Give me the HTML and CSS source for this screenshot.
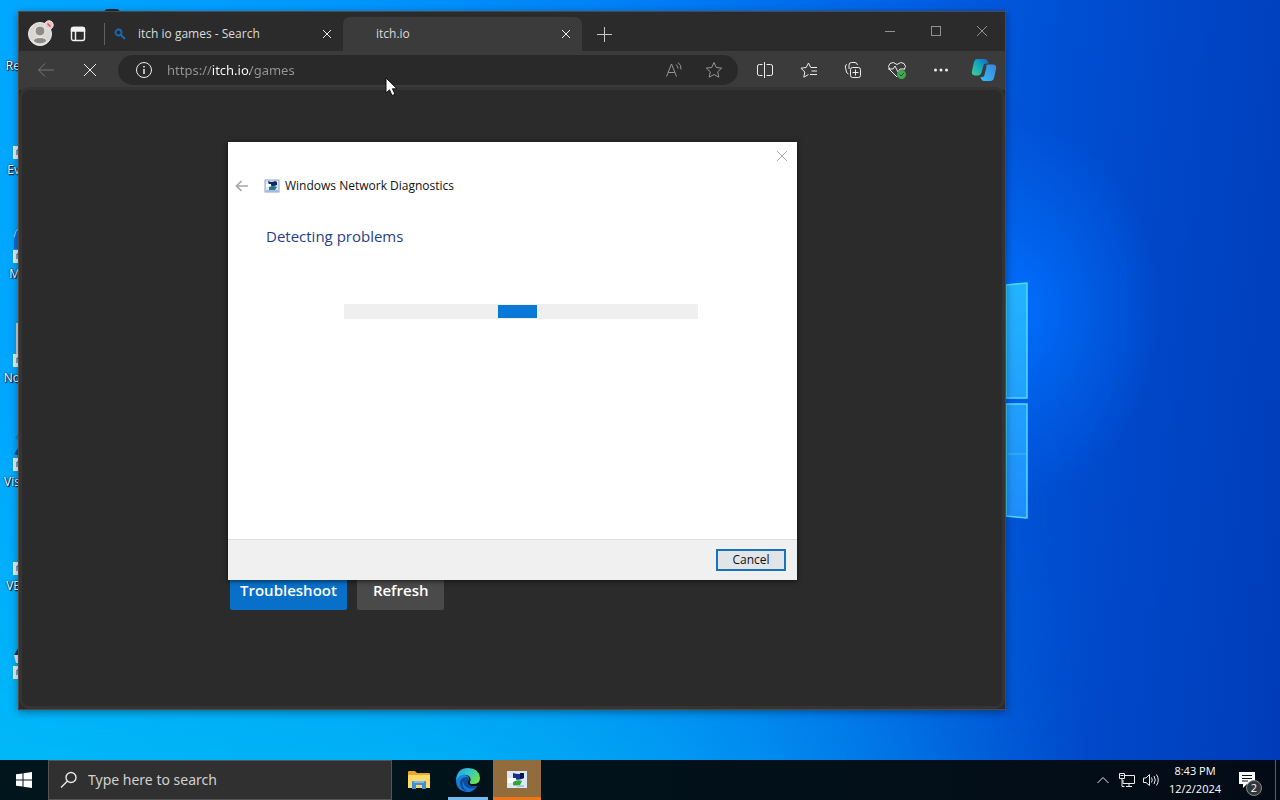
FILE: index.html
```html
<!DOCTYPE html>
<html lang="en">
<head>
<meta charset="utf-8">
<title>Desktop</title>
<link rel="stylesheet" href="styles.css">
</head>
<body>
<main class="desktop">
  <svg class="wall-logo" viewBox="0 0 22 240" aria-hidden="true">
    <defs>
      <linearGradient id="pane" x1="0" y1="0" x2="0" y2="1"><stop offset="0" stop-color="#22b4ff"/><stop offset="1" stop-color="#1f8dfa"/></linearGradient>
    </defs>
    <path d="M0 5 21 3V118H0zM0 124H21V238L0 236z" fill="url(#pane)" stroke="#4cdcff" stroke-width="1.5"/>
    <path d="M0 174h20" stroke="#38b9ff"/>
  </svg>
  <ul class="shortcuts">
    <li><span>Re</span></li>
    <li><svg viewBox="0 0 8 44"><path class="badge" d="M1 31h7v13H1z"/><path class="arrow" d="M7 35H5v5"/></svg><span>Ev</span></li>
    <li><svg viewBox="0 0 8 44"><path d="M8 8Q1 14 2 30H8z" fill="#0a6fd6"/><path d="M8 8Q3 12 2 18" stroke="#9bd4ff" fill="none"/><path class="badge" d="M1 31h7v13H1z"/><path class="arrow" d="M7 35H5v5"/></svg><span>M</span></li>
    <li><svg viewBox="0 0 8 44"><path d="M4 0h4v31H4z" fill="#cfd6da"/><path class="badge" d="M1 31h7v13H1z"/><path class="arrow" d="M7 35H5v5"/></svg><span>No</span></li>
    <li><svg viewBox="0 0 8 44"><path d="M8 4 3 11l5 3z" fill="#0b83cc"/><path d="M8 18 2 27l6 2z" fill="#0c4f86"/><path class="badge" d="M1 31h7v13H1z"/><path class="arrow" d="M7 35H5v5"/></svg><span>Vis</span></li>
    <li><svg viewBox="0 0 8 44"><path class="badge" d="M1 31h7v13H1z"/><path class="arrow" d="M7 35H5v5"/></svg><span>VE</span></li>
    <li><svg viewBox="0 0 8 44"><path d="M8 10 2 20l6 2z" fill="#123b63"/><path d="M2 20h6v8H4z" fill="#e9eef2"/><path class="badge" d="M1 31h7v13H1z"/><path class="arrow" d="M7 35H5v5"/></svg><span></span></li>
  </ul>
  <svg class="hidden-icon" viewBox="0 0 16 8" aria-hidden="true"><path d="M0 4Q1 1 4 1H12Q15 1 16 4V8H0z" fill="#12283c"/></svg>

  <section class="browser" aria-label="Browser">
    <div class="tabstrip">
      <button class="profile" aria-label="Profile">
        <svg width="26" height="26" viewBox="0 0 26 26" stroke="none"><circle cx="12" cy="14" r="11.5" fill="#d8d7d3"/><circle cx="12" cy="11" r="5" fill="#8d8c88"/><path d="M5 21Q6 17.500 12 17.500T19 21Q16 24 12 24T5 21z" fill="#8d8c88"/><circle cx="21" cy="5" r="4.200" fill="#eac6c4"/><path d="M19.500 3.500l3 3" stroke="#d2564f" stroke-width="1.500"/></svg>
      </button>
      <button class="workspaces" aria-label="Tab actions">
        <svg width="16" height="16" viewBox="0 0 16 16"><g stroke="#f2f2f2" stroke-width="1.400"><rect x="1.500" y="1.500" width="13" height="13" rx="2"/><path d="M1.500 5V3q0-1.500 1.500-1.500H13q1.500 0 1.500 1.500V5z" fill="#f2f2f2"/><path d="M5.500 5v9.500"/></g></svg>
      </button>
      <div class="tab">
        <svg class="favicon" width="12" height="12" viewBox="0 0 12 12" fill="none" stroke="#1769b5"><circle cx="4.500" cy="4.500" r="3" stroke-width="1.800"/><path d="M7 7l4 4" stroke-width="2"/></svg>
        <span>itch io games - Search</span>
        <button aria-label="Close tab"><svg width="10" height="10" viewBox="0 0 10 10"><path d="M1 1l8 8M9 1 1 9"/></svg></button>
      </div>
      <div class="tab active">
        <span>itch.io</span>
        <button aria-label="Close tab"><svg width="10" height="10" viewBox="0 0 10 10"><path d="M1 1l8 8M9 1 1 9"/></svg></button>
      </div>
      <button class="newtab" aria-label="New tab"><svg width="15" height="15" viewBox="0 0 15 15"><path d="M7.500 0v15M0 7.500h15" stroke="#c8c8c8"/></svg></button>
      <div class="caption">
        <button aria-label="Minimize"><svg width="12" height="12" viewBox="0 0 12 12"><path d="M1 6.500h10"/></svg></button>
        <button aria-label="Maximize"><svg width="12" height="12" viewBox="0 0 12 12"><rect x="1.500" y="1.500" width="9" height="9"/></svg></button>
        <button aria-label="Close"><svg width="12" height="12" viewBox="0 0 12 12"><path d="M1 1l10 10M11 1 1 11"/></svg></button>
      </div>
    </div>
    <div class="toolbar">
      <button class="back" aria-label="Back"><svg width="18" height="16" viewBox="0 0 18 16"><path d="M17 8H1.500M8 1.500 1.500 8 8 14.500"/></svg></button>
      <button aria-label="Stop"><svg width="16" height="16" viewBox="0 0 16 16"><path d="M2 2l12 12M14 2 2 14"/></svg></button>
      <div class="address">
        <button aria-label="Site information"><svg width="18" height="18" viewBox="0 0 18 18"><circle cx="9" cy="9" r="7.500"/><path d="M9 8v5M9 5v1.500" stroke-width="1.500"/></svg></button>
        <input type="text" aria-label="Address" value="https://itch.io/games">
        <button class="dim" aria-label="Read aloud"><svg width="18" height="18" viewBox="0 0 18 18"><path d="M1.500 15.500 6.500 3l5 12.500M3.200 11.500h6.600M11 3.500q2 1.500 2 4M13 1.500q3.500 2.500 3 7"/></svg></button>
        <button class="dim" aria-label="Add to favorites"><svg width="18" height="18" viewBox="0 0 18 18"><path d="M9 1.500l2.300 5 5.400.6-4 3.700 1.100 5.400L9 13.500l-4.800 2.700 1.100-5.400-4-3.700 5.400-.6z"/></svg></button>
      </div>
      <button aria-label="Split screen"><svg width="18" height="18" viewBox="0 0 18 18"><path d="M6.500 3.500H3.500Q1.500 3.500 1.500 5v8q0 1.500 2 1.500h3M10.500 3.500h4q2 0 2 1.500v8q0 1.500-2 1.500h-4M8.500 1v16"/></svg></button>
      <button aria-label="Favorites"><svg width="18" height="18" viewBox="0 0 18 18"><path d="M8.500 13.500 3.800 16.200 4.800 11 1 7.200l5.200-.7L8.500 2l2.300 4.500H17M11.500 10H17M10 13.500h7"/></svg></button>
      <button aria-label="Collections"><svg width="18" height="18" viewBox="0 0 18 18"><rect x="6.500" y="6.500" width="10" height="10" rx="2"/><path d="M11.500 8.500v6M8.500 11.500h6M4.500 13Q3 12.500 2.500 11L1.300 6Q1 4 3 3.500M5 8V4Q5 1.500 7.500 1.500H11Q13 1.500 13.500 4"/></svg></button>
      <button aria-label="Browser essentials"><svg width="20" height="20" viewBox="0 0 20 20"><path d="M10 17 3 10Q0 6 3 3.500T10 4.500Q14 1 17 3.500T17 10M1 9h5l2-3 3 6 2-3h4"/><circle cx="14.500" cy="14.500" r="4.500" fill="#3fa94d" stroke="none"/><path d="M12.500 14.500l1.500 1.500 3-3" stroke="#1e5227"/></svg></button>
      <button aria-label="Settings and more"><svg width="18" height="18" viewBox="0 0 18 18"><g fill="#eee" stroke="none"><circle cx="3.500" cy="9" r="1.500"/><circle cx="9" cy="9" r="1.500"/><circle cx="14.500" cy="9" r="1.500"/></g></svg></button>
      <button class="copilot" aria-label="Copilot">
        <svg width="26" height="24" viewBox="0 0 26 24"><defs><linearGradient id="ca" x1="0" y1="1" x2="1" y2="0"><stop offset="0" stop-color="#45cf93"/><stop offset=".5" stop-color="#15a9ba"/><stop offset="1" stop-color="#1367c5"/></linearGradient><linearGradient id="cb" x1="0" y1="1" x2="1" y2="0"><stop offset="0" stop-color="#32bdf5"/><stop offset="1" stop-color="#3a83de"/></linearGradient></defs><g stroke="none"><path d="M6 1h8q2.500 0 3.500 4.500H14.500q-1.500 0-2 2l-2 7Q9.500 17.500 7 17.500H4Q0 17 1 13L3 4Q3.800 1 6 1z" fill="url(#ca)"/><path d="M17 6.500h5q4 0 3 4.500l-2 9q-.8 3-3 3h-7q-2.500 0-3.500-4h2q1.500 0 2-2l2-8Q14.500 6.500 17 6.500z" fill="url(#cb)"/></g></svg>
      </button>
    </div>
    <div class="page">
      <button class="primary">Troubleshoot</button>
      <button>Refresh</button>
    </div>
  </section>

  <section class="dialog" role="dialog" aria-labelledby="dlg-name">
    <div class="dialog-bar">
      <button aria-label="Close"><svg width="12" height="12" viewBox="0 0 12 12"><path d="M1 1l10 10M11 1 1 11"/></svg></button>
    </div>
    <header>
      <button aria-label="Back"><svg width="14" height="12" viewBox="0 0 14 12"><path d="M13 6H2M6.500 1 1.500 6l5 5" stroke-width="1.700"/></svg></button>
      <svg width="16" height="16" viewBox="0 0 16 16"><rect x="1" y="2" width="14" height="12" fill="#dbe9fa" stroke="#95a3bd"/><path d="M4 3q4 2 7 0l2 1v3q-4 2-8 0z" fill="#142466"/><path d="M2 6h5v3H2z" fill="#fff"/><path d="M5 9q4-2 8 0l-2 3q-3 1-6 0z" fill="#237c82"/><path d="M2 12h12v2H2z" fill="#a9b9e0"/></svg>
      <span id="dlg-name">Windows Network Diagnostics</span>
    </header>
    <h1>Detecting problems</h1>
    <div class="progress" role="progressbar" aria-label="Detecting problems"><i></i></div>
    <footer><button>Cancel</button></footer>
  </section>

  <svg class="pointer" width="14" height="20" viewBox="0 0 14 20" aria-hidden="true"><path d="M1 1v15l3.500-3.200L7 18.500l3-1.300-2.600-5.400H12z" fill="#fff" stroke="#111"/></svg>
</main>

<footer class="taskbar">
  <button class="start" aria-label="Start"><svg width="16" height="16" viewBox="0 0 16 16"><path d="M0 2.300 6.500 1.400V7.500H0zM7.500 1.200 16 0V7.500H7.500zM0 8.500H6.500v6.100L0 13.700zM7.500 8.500H16V16L7.500 14.800z" fill="#fff" stroke="none"/></svg></button>
  <label class="search">
    <svg width="18" height="18" viewBox="0 0 18 18" fill="none" stroke="#e6e6e6" stroke-width="1.400"><circle cx="11" cy="6.500" r="5"/><path d="M7.500 10 1 16.500"/></svg>
    <input type="text" placeholder="Type here to search" aria-label="Type here to search">
  </label>
  <div class="apps">
    <button aria-label="File Explorer"><svg width="24" height="22" viewBox="0 0 24 22"><path d="M1 3Q1 2 2 2h6l2 2h12q1 0 1 1v14H1z" fill="#e9a92d"/><path d="M1 6h22v13H1z" fill="#ffda6b"/><path d="M5 20v-7q0-1 1-1h12q1 0 1 1v7h-4v-4H9v4z" fill="#3f8fd6"/><path d="M7 12h10v2H7z" fill="#7db9ec"/></svg></button>
    <button class="running" aria-label="Microsoft Edge"><svg width="24" height="24" viewBox="0 0 24 24"><defs><linearGradient id="ea" x1="0" y1="0" x2="1" y2=".5"><stop offset="0" stop-color="#249ce5"/><stop offset=".5" stop-color="#30c5cf"/><stop offset="1" stop-color="#69df54"/></linearGradient><linearGradient id="eb" x1="0" y1="0" x2="0" y2="1"><stop offset="0" stop-color="#1787d8"/><stop offset="1" stop-color="#1772d2"/></linearGradient></defs><path d="M0 12Q1 5 8 6.500 14 8 13 12q-2 1-1.500 3 1.500 4 10 3Q17 24 12 24 0 23.500 0 12z" fill="url(#eb)"/><path d="M7 13q-2 6 4 10Q4 22 4 15q0-5 6-6 3 0 3 3-2 .5-1.500 3 1.500 4 10 3-3 3-7 2.500Q8 20 7 13z" fill="#0b4b9c"/><path d="M0 12Q1 0 12 0q11 0 12 10 0 6-7 6-4 0-3-2Q16 10 12 7.500 5 4.500 0 12z" fill="url(#ea)"/></svg></button>
    <button class="alert" aria-label="Windows Network Diagnostics"><svg width="22" height="20" viewBox="0 0 22 20"><path d="M1 1h20v17H1z" fill="#dce8f5"/><path d="M7 3q6 2 11 0v5q-5 3-11 1z" fill="#182f94"/><path d="M14 3h4v5l-4 1z" fill="#0c1748"/><path d="M2 8h8v5H2z" fill="#fff"/><path d="M7 12q5-3 9-1l-2 4q-4 1-7 0z" fill="#2ba83c"/><path d="M11 15h7v2h-7z" fill="#b2c7cc"/></svg></button>
  </div>
  <div class="tray">
    <button aria-label="Show hidden icons"><svg width="14" height="14" viewBox="0 0 14 14"><path d="M1.500 10 7 4.500l5.500 5.500"/></svg></button>
    <button aria-label="Network"><svg width="18" height="16" viewBox="0 0 18 16"><path d="M7 3.500h9.500v8H5V8M8 14.500h6M11 11.500v3M1.500 1.500h5v5h-5zM4 6.500v8h2.500M2.500 3.500h3"/></svg></button>
    <button aria-label="Volume"><svg width="18" height="16" viewBox="0 0 18 16"><path d="M1.500 6v4.500H4l3.500 3v-11L4 6zM9.500 5.500q1.500 2.500 0 5M12 4q2.500 4 0 8M14.500 2.500q3.500 5.500 0 11"/></svg></button>
    <button class="clock"><time>8:43 PM</time><time>12/2/2024</time></button>
    <button class="notices" aria-label="Notifications"><svg width="18" height="18" viewBox="0 0 18 18"><path d="M1 1h16v12H9l-4 4v-4H1z" fill="#fff" stroke="none"/><path d="M4 4.500h10M4 7.500h10M4 10h6" stroke="#06101a"/></svg><span>2</span></button>
  </div>
  <button class="peek" aria-label="Show desktop"></button>
</footer>
</body>
</html>
```
FILE: styles.css
```css
* { box-sizing: border-box; }

body {
  display: flex;
  flex-direction: column;
  height: 100vh;
  margin: 0;
  overflow: hidden;
  font: 12px/16px "Open Sans", "Noto Sans", sans-serif;
}

button {
  display: flex;
  align-items: center;
  justify-content: center;
  padding: 0;
  border: 0;
  background: none;
  color: inherit;
  font: inherit;
}

button svg { fill: none; stroke: #ededed; flex: none; }

input {
  min-width: 0;
  padding: 0;
  border: 0;
  outline: 0;
  background: none;
  font: inherit;
}

/* Desktop */
.desktop {
  position: relative;
  flex: 1;
  background:
    radial-gradient(ellipse 150px 190px at 1010px 310px, #0070ff 0, #006cf8a0 40%, #0060f000 100%),
    linear-gradient(95deg, #00a8ff 0, #0098fe 24%, #007cf4 50%, #0060e4 68%, #004ed2 80%, #003cb8 100%);
}

.desktop::before {
  content: "";
  position: absolute;
  inset: 50% 15% 0 0;
  background: linear-gradient(90deg, #00b8f8 0, #00aef4 40%, #0080e800 100%);
  mask-image: linear-gradient(transparent, #000);
}

.wall-logo { position: absolute; left: 1006px; top: 280px; width: 22px; height: 240px; }
.hidden-icon { position: absolute; left: 104px; top: 8px; width: 16px; height: 8px; }

.shortcuts {
  position: relative;
  width: 20px;
  margin: 0;
  padding: 0;
  list-style: none;
  color: #fff;
  text-shadow: 1px 1px 1px #002, 0 0 2px #002;
}

.shortcuts li {
  display: flex;
  flex-direction: column;
  align-items: flex-end;
  justify-content: flex-end;
  gap: 3px;
  height: 104px;
}

.shortcuts li:first-child { height: 74px; }
.shortcuts svg { width: 8px; height: 44px; }
.shortcuts span { height: 16px; }
.badge { fill: #eef2f5; }
.arrow { fill: none; stroke: #1d5a96; }

/* Browser window */
.browser {
  position: absolute;
  inset: 11px 274px 50px 18px;
  display: flex;
  flex-direction: column;
  border: 1px solid #514940;
  background: #2b2b2b;
  color: #dcdcdc;
  box-shadow: 0 2px 8px #0006;
}

.tabstrip { display: flex; height: 39px; padding-left: 9px; }
.profile { width: 28px; padding-top: 2px; justify-content: flex-start; align-items: center; }
.workspaces { width: 44px; padding-top: 5px; margin-right: 4px; }

.tab {
  display: flex;
  align-items: center;
  flex: 0 0 239px;
  height: 34px;
  margin-top: 5px;
  padding: 0 10px 0 9px;
}

.tab.active { padding-left: 33px; border-radius: 7px 7px 0 0; background: #3b3b3b; }
.tab:not(.active)::before { content: ""; width: 1px; height: 22px; margin: 0 9px 0 -9px; background: #606060; }
.tab span { flex: 1; }
.tab .favicon { margin-right: 12px; }
.tab button { width: 12px; height: 16px; }
.newtab { width: 45px; padding-top: 5px; }
.caption { display: flex; height: 38px; margin-left: auto; }
.caption button { width: 46px; }
.caption svg { stroke: #929292; }

.toolbar {
  display: flex;
  align-items: center;
  height: 39px;
  padding: 0 0 2px 5px;
  background: #3b3b3b;
}

.toolbar > button { width: 44px; height: 32px; flex: none; }
.toolbar .back svg { stroke: #777; }
.toolbar > .copilot { width: 42px; }

.address {
  display: flex;
  align-items: center;
  flex: 1;
  height: 30px;
  margin: 0 5px 0 6px;
  padding: 0 4px 0 10px;
  border-radius: 15px;
  background: #292929;
}

.address button { width: 32px; }
.address .dim { width: 40px; }
.address .dim svg { stroke: #969696; }

.address input {
  flex: 1;
  margin-left: 7px;
  font-family: "Noto Sans", sans-serif;
  font-size: 13px;
  line-height: 20px;
  color: transparent;
  background: linear-gradient(90deg, #969696 45px, #fff 45px, #fff 83px, #969696 83px);
  background-clip: text;
  -webkit-background-clip: text;
}

.page {
  display: flex;
  flex: 1;
  align-items: flex-end;
  gap: 10px;
  margin: 0 3px 3px;
  padding: 0 208px 96px;
  border-radius: 7px;
  background: #2b2b2b;
  box-shadow: 0 0 0 3px #343434;
}

.page button {
  height: 40px;
  padding: 0 16px;
  border-radius: 2px;
  background: #4a4a4a;
  color: #fff;
  font-size: 15px;
  font-weight: 600;
}

.page .primary { padding: 0 10px; background: #0870c8; }

/* Diagnostics dialog */
.dialog {
  position: absolute;
  left: 228px;
  top: 142px;
  display: flex;
  flex-direction: column;
  width: 569px;
  height: 438px;
  background: #fff;
  color: #111;
  box-shadow: 0 1px 5px #000a;
}

.dialog-bar { display: flex; justify-content: flex-end; height: 28px; }
.dialog-bar button { width: 30px; }
.dialog-bar svg, .dialog header button svg { stroke: #a9a9a9; }
.dialog header { display: flex; align-items: center; height: 32px; padding-left: 7px; }
.dialog header button { width: 14px; margin-right: 15px; }
.dialog header span { margin-left: 5px; }

.dialog h1 {
  margin: 22px 38px 0;
  color: #1f3f86;
  font-size: 15px;
  font-weight: 400;
  line-height: 24px;
}

.progress {
  display: flex;
  height: 15px;
  margin: 56px 99px 0 116px;
  padding: 1px 0;
  background: #efefef;
}

.progress i { width: 39px; margin-left: 154px; background: #0a78d7; }

.dialog footer {
  display: flex;
  align-items: center;
  justify-content: flex-end;
  height: 41px;
  margin-top: auto;
  padding-right: 11px;
  border-top: 1px solid #dedede;
  background: #f0f0f0;
}

.dialog footer button {
  width: 70px;
  height: 22px;
  border: 2px solid #1674bd;
  background: #e1e5e8;
}

.pointer { position: absolute; left: 385px; top: 77px; }

/* Taskbar */
.taskbar {
  position: relative;
  display: flex;
  height: 40px;
  background: linear-gradient(90deg, #00151c, #02121a 50%, #030b16);
  color: #fff;
}

.start { width: 48px; }

.search {
  display: flex;
  align-items: center;
  gap: 10px;
  width: 344px;
  padding-left: 11px;
  border: 1px solid #555;
  background: #303030;
}

.search input { flex: 1; font-family: "Noto Sans", sans-serif; font-size: 14px; line-height: 24px; color: #fff; }
.search input::placeholder { color: #d0d0d0; opacity: 1; }
.apps { display: flex; padding-left: 3px; }
.apps button { width: 48px; border-bottom: 3px solid transparent; padding-top: 3px; }
.apps svg { stroke: none; }
.apps .running { width: 40px; margin: 0 5px; border-color: #76b9ed; }
.apps .alert { background: #916c3c; border-color: #ee7618; }
.tray { display: flex; margin-left: auto; padding-right: 8px; }
.tray > button { width: 24px; }
.tray > .clock { flex-direction: column; width: 64px; font-size: 11px; line-height: 18px; }

.tray > .notices { position: relative; width: 40px; }

.notices span {
  position: absolute;
  right: 5px;
  bottom: 4px;
  width: 16px;
  height: 16px;
  border: 1px solid #858b90;
  border-radius: 50%;
  background: #30363c;
  font-size: 11px;
  line-height: 14px;
}

.peek { width: 5px; border-left: 1px solid #596068; }
```
